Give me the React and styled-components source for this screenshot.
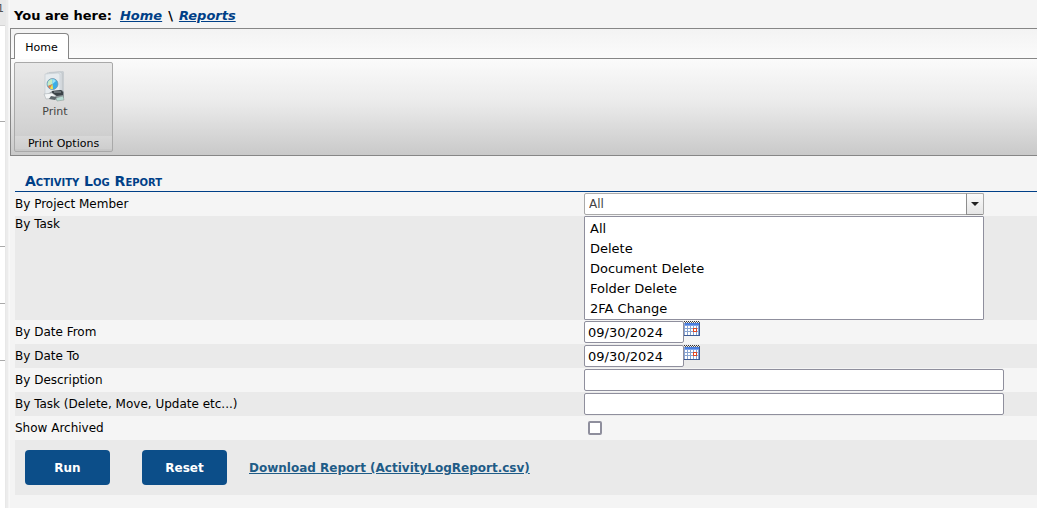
import React, { useState } from 'react';
import styled, { createGlobalStyle } from 'styled-components';

const GlobalStyle = createGlobalStyle`
  * {
    box-sizing: border-box;
  }

  body {
    margin: 0;
    background-color: #f4f4f4;
    color: #000;
    font-family: 'DejaVu Sans', Verdana, sans-serif;
    font-size: 12px;
    overflow: hidden;
  }

  input,
  select,
  button {
    font-family: inherit;
  }
`;

const Page = styled.div`
  display: flex;
  min-height: 100vh;
`;

const Sidebar = styled.aside`
  flex: none;
  width: 6px;
  background-color: #fff;
  border-right: 1px solid #e8e8e8;
  overflow: hidden;
`;

const SidebarHeader = styled.div`
  display: flex;
  justify-content: flex-end;
  height: 26px;
  padding-right: 1px;
  background-color: #e8e8e8;
  border-bottom: 1px solid #d4d4d4;
  color: #555;
  font-size: 11px;
  line-height: 18px;
`;

const SidebarItem = styled.div`
  height: ${props => props.$height}px;
  border-bottom: 1px solid #aaa;
`;

const Gutter = styled.div`
  flex: none;
  width: 4px;
  background-color: #f4f4f4;
  border-left: 2px solid #ececec;
  border-right: 1px solid #f8f8f8;
`;

const Main = styled.main`
  flex: 1;
  min-width: 0;
`;

const Breadcrumb = styled.nav`
  display: flex;
  gap: 6px;
  height: 28px;
  padding: 0 4px;
  font-size: 13px;
  font-weight: bold;
  line-height: 32px;

  span:first-child {
    margin-right: 2px;
  }

  a {
    color: #003f87;
    font-style: italic;
  }
`;

const Ribbon = styled.section`
  border: 1px solid #868686;
  border-right: none;
`;

const TabStrip = styled.div`
  display: flex;
  align-items: flex-end;
  height: 30px;
  padding: 0 3px;
  background: linear-gradient(#f3f3f3, #fbfbfb);
  border-bottom: 1px solid #868686;
`;

const Tab = styled.button`
  width: 55px;
  height: 26px;
  margin-bottom: -1px;
  padding: 2px 0 0;
  background-color: #fff;
  border: 1px solid #868686;
  border-bottom: none;
  border-radius: 4px 4px 0 0;
  color: #000;
  font-size: 11px;
`;

const RibbonBody = styled.div`
  height: 96px;
  padding: 3px;
  background: linear-gradient(#fbfbfb, #ebebeb 45%, #c9c9c9);
`;

const RibbonGroup = styled.div`
  display: flex;
  flex-direction: column;
  justify-content: space-between;
  width: 99px;
  height: 90px;
  padding-bottom: 2px;
  background: linear-gradient(#e9e9e9, #d2d2d2 75%, #c6c6c6);
  border: 1px solid #a9a9a9;
  border-radius: 2px;
`;

const PrintButton = styled.button`
  display: flex;
  flex-direction: column;
  align-items: center;
  align-self: flex-start;
  gap: 2px;
  width: 80px;
  padding: 8px 0 0;
  background: none;
  border: none;
  color: #444;
  font-size: 11px;
  line-height: 14px;
`;

const GroupTitle = styled.div`
  height: 13px;
  background: linear-gradient(#d8d8d8, #cecece);
  font-size: 11px;
  line-height: 15px;
  text-align: center;
`;

const Report = styled.form`
  padding: 16px 0 0 5px;
`;

const ReportTitle = styled.h1`
  margin: 0;
  padding: 0 10px;
  border-bottom: 1px solid #003f87;
  color: #003f87;
  font-size: 14px;
  font-variant: small-caps;
  line-height: 19px;
`;

const Row = styled.div`
  display: grid;
  grid-template-columns: 569px 1fr;
  align-items: center;
  min-height: 24px;
  background-color: ${props => (props.$shaded ? '#eaeaea' : '#f5f5f5')};
`;

const Label = styled.label`
  align-self: start;
  line-height: ${props => (props.$top ? '16px' : '24px')};
`;

const Field = styled.div`
  display: flex;
  align-items: flex-start;
`;

const Combo = styled.div`
  display: grid;
  width: 400px;

  > * {
    grid-area: 1 / 1;
  }
`;

const ComboSelect = styled.select`
  appearance: none;
  height: 22px;
  padding: 0 20px 0 4px;
  background-color: #fff;
  border: 1px solid #aaa;
  border-radius: 2px;
  color: #444;
  font-size: 12px;
`;

const ComboArrow = styled.span`
  display: flex;
  align-items: center;
  justify-content: center;
  justify-self: end;
  width: 18px;
  height: 22px;
  background: linear-gradient(#fafafa, #e6e6e6);
  border: 1px solid #aaa;
  border-left-color: #8e8e8e;
  border-bottom-color: #8e8e8e;
  border-radius: 0 2px 2px 0;
  pointer-events: none;
`;

const ListBox = styled.select`
  width: 400px;
  height: 104px;
  padding: 2px 0 0;
  background-color: #fff;
  border: 1px solid #8f8f9d;
  border-radius: 1px;
  color: #000;
  font-size: 13px;
  overflow: hidden;

  option {
    height: 20px;
    min-height: 20px;
    padding: 2px 5px 0;
  }
`;

const TextInput = styled.input`
  width: ${props => (props.$date ? '100px' : '420px')};
  height: 22px;
  padding: 1px 3px 0;
  background-color: #fff;
  border: 1px solid #8f8f9d;
  border-radius: 2px;
  color: #000;
  font-size: 13px;
`;

const CalendarButton = styled.button`
  display: flex;
  padding: 0;
  background: none;
  border: none;
`;

const CheckBox = styled.input`
  appearance: none;
  width: 14px;
  height: 14px;
  margin: 0 4px;
  background-color: #fff;
  border: 2px solid #8f8f9d;
  border-radius: 2px;

  &:checked {
    background-color: #0c4e89;
  }
`;

const Actions = styled.div`
  display: flex;
  align-items: flex-start;
  height: 55px;
  padding: 10px;
  background-color: #eaeaea;
`;

const ActionButton = styled.button`
  width: 85px;
  height: 35px;
  margin-right: 32px;
  padding: 0;
  background-color: #0c4e89;
  border: none;
  border-radius: 4px;
  color: #fff;
  font-size: 12px;
  font-weight: bold;
`;

const DownloadLink = styled.a`
  margin-left: -10px;
  color: #1f5c87;
  font-size: 12px;
  font-weight: bold;
  line-height: 36px;
`;

const PrintIcon = () => (
  <svg width="32" height="32" viewBox="0 0 32 32" aria-hidden="true">
    <path d="M10 1L24 0L25 1V26H10z" fill="#c9ced2" />
    <path d="M8 2L21 1L23 2V26H8z" fill="#dde2e5" stroke="#b9c0c5" strokeWidth=".6" />
    <path d="M6 3L19 2L21 3V25H6z" fill="#e6ebee" stroke="#c0c7cc" strokeWidth=".6" />
    <circle cx="13.5" cy="13" r="5.5" fill="#3aaee8" stroke="#7896a8" strokeWidth=".8" />
    <path d="M13.5 13V8A5 5 0 0 0 9 15z" fill="#c8ecc4" />
    <path d="M13.5 13L9 15A5 5 0 0 0 11 17.5z" fill="#ee7d45" />
    <path d="M13.5 13L11 17.5A5 5 0 0 0 14 18z" fill="#f6e44c" />
    <path d="M13.5 8A5 5 0 0 1 17 10L13.5 13z" fill="#9be2f8" />
    <path d="M13 20L23 19L25 21V27L19 29L9 27V23z" fill="#8c9499" />
    <path d="M13 20L22 19L24 21V24L18 25L13 23z" fill="#3b4247" />
    <path d="M15 21H22" stroke="#9ba3a8" />
    <path d="M5 23L13 22L17 25L15 27L7 28z" fill="#f3f5f6" stroke="#a9b0b4" strokeWidth=".6" />
    <path d="M12 25L18 26L16 29L10 28z" fill="#5c656a" />
    <path d="M17 27L24 25L25 29L18 30z" fill="#b9ddd5" stroke="#879490" strokeWidth=".5" />
  </svg>
);

const CalendarIcon = () => (
  <svg width="16" height="16" viewBox="0 0 16 16" shapeRendering="crispEdges" aria-hidden="true">
    <path d="M0 2h16v13H0z" fill="#3c5a94" />
    <path d="M0 2h15v12H0z" fill="#8aa5d6" />
    <path d="M1 2h14v2H1z" fill="#4a7fe0" />
    <path d="M1 4h14v1H1z" fill="#7ba4ee" />
    <path d="M1 5h13v9H1z" fill="#fff" />
    <path d="M3.5 5v9M6.5 5v9M9.5 5v9M12.5 5v9M1 7.5h13M1 10.5h13" stroke="#88a4d0" />
    <path d="M0 .5h16" stroke="#333" strokeDasharray="1 1" />
    <path d="M1 1.5h15" stroke="#555" strokeDasharray="1 1" />
    <path d="M9.5 7.5h3v3h-3z" fill="#fff" stroke="#e0451f" />
  </svg>
);

const tasks = ['All', 'Delete', 'Document Delete', 'Folder Delete', '2FA Change'];

const sidebarItems = [96, 125, 57, 57];

const DateField = ({ id, label, shaded }) => {
  const [date, setDate] = useState('09/30/2024');

  return (
    <Row $shaded={shaded}>
      <Label htmlFor={id}>{label}</Label>
      <Field>
        <TextInput
          $date
          id={id}
          value={date}
          onChange={e => setDate(e.target.value)}
        />
        <CalendarButton type="button" aria-label={`Pick ${label}`}>
          <CalendarIcon />
        </CalendarButton>
      </Field>
    </Row>
  );
};

const App = () => (
  <Page>
    <GlobalStyle />
    <Sidebar>
      <SidebarHeader>1</SidebarHeader>
      {sidebarItems.map((height, i) => (
        <SidebarItem key={i} $height={height} />
      ))}
    </Sidebar>
    <Gutter />
    <Main>
      <Breadcrumb>
        <span>You are here:</span>
        <a href="#home">Home</a>
        <span>\</span>
        <a href="#reports">Reports</a>
      </Breadcrumb>

      <Ribbon>
        <TabStrip>
          <Tab type="button">Home</Tab>
        </TabStrip>
        <RibbonBody>
          <RibbonGroup>
            <PrintButton type="button">
              <PrintIcon />
              Print
            </PrintButton>
            <GroupTitle>Print Options</GroupTitle>
          </RibbonGroup>
        </RibbonBody>
      </Ribbon>

      <Report onSubmit={e => e.preventDefault()}>
        <ReportTitle>Activity Log Report</ReportTitle>
        <Row>
          <Label htmlFor="member">By Project Member</Label>
          <Combo>
            <ComboSelect id="member">
              <option>All</option>
            </ComboSelect>
            <ComboArrow>
              <svg width="8" height="4" viewBox="0 0 8 4" aria-hidden="true">
                <path d="M0 0h8L4 4z" fill="#222" />
              </svg>
            </ComboArrow>
          </Combo>
        </Row>
        <Row $shaded>
          <Label $top htmlFor="task">By Task</Label>
          <ListBox id="task" multiple size={5}>
            {tasks.map(task => (
              <option key={task}>{task}</option>
            ))}
          </ListBox>
        </Row>
        <DateField id="dateFrom" label="By Date From" />
        <DateField id="dateTo" label="By Date To" shaded />
        <Row>
          <Label htmlFor="description">By Description</Label>
          <TextInput id="description" />
        </Row>
        <Row $shaded>
          <Label htmlFor="taskText">By Task (Delete, Move, Update etc...)</Label>
          <TextInput id="taskText" />
        </Row>
        <Row>
          <Label htmlFor="archived">Show Archived</Label>
          <CheckBox id="archived" type="checkbox" />
        </Row>
        <Actions>
          <ActionButton type="submit">Run</ActionButton>
          <ActionButton type="reset">Reset</ActionButton>
          <DownloadLink href="#download">
            Download Report (ActivityLogReport.csv)
          </DownloadLink>
        </Actions>
      </Report>
    </Main>
  </Page>
);

export default App;
